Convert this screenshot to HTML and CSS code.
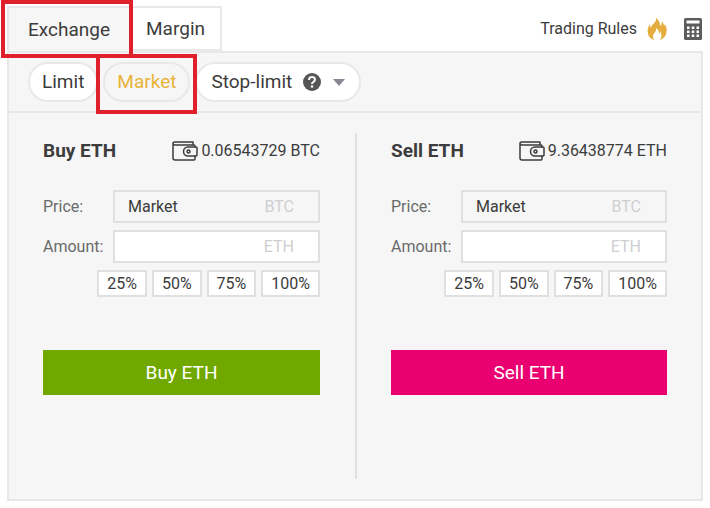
FILE: index.html
```html
<!DOCTYPE html>
<html lang="en">
<head>
<meta charset="utf-8">
<meta name="viewport" content="width=device-width, initial-scale=1">
<title>Exchange</title>
<link rel="stylesheet" href="styles.css">
</head>
<body>
<svg class="defs" aria-hidden="true">
  <symbol id="wallet" viewBox="0 0 26 20">
    <g fill="none" stroke="currentColor" stroke-width="1.5" stroke-linejoin="round" stroke-linecap="round">
      <path d="M23 6V5Q23 4 22 4H3Q1 4 1 2.500Q1 1 3 1H21V4M1 2.500V17Q1 19 3 19H22Q23 19 23 18V15"/>
      <path d="M16 6H24Q25 6 25 7V14Q25 15 24 15H16A4.500 4.500 0 0 1 16 6Z"/>
      <circle cx="16.500" cy="10.500" r="1.500"/>
    </g>
  </symbol>
</svg>
<main class="trade">
  <header class="top">
    <nav class="tabs">
      <button class="tab active marked" type="button">Exchange</button>
      <button class="tab" type="button">Margin</button>
    </nav>
    <div class="tools">
      <a class="rules" href="#rules">Trading Rules
        <svg class="flame" viewBox="0 0 20 22" aria-hidden="true"><path fill="#e5ad3d" d="M9 0C13 3 13 6 13 8Q15 7 15 3C16 5 17 6 17 8Q18 7 18 6C20 10 20 13 19 16Q18 20 13 22C15 19 15 16 13 13Q13 15 12 16C12 13 11 11 9 10C10 14 6 15 6 18Q6 20 7 22Q2 20 1 16C0 12 1 9 3 6Q3 9 4 10C4 6 10 5 9 0Z"/></svg>
      </a>
      <button class="calc" type="button" aria-label="Calculator">
        <svg viewBox="0 0 18 22" aria-hidden="true"><rect width="18" height="22" rx="1.500" fill="#5c5c5c"/><path fill="#fff" d="M2.500 2.500H15.500V5.500H2.500ZM3 8.500H5.500V11H3ZM7.750 8.500H10.250V11H7.750ZM12.500 8.500H15V11H12.500ZM3 12.500H5.500V15H3ZM7.750 12.500H10.250V15H7.750ZM12.500 12.500H15V15H12.500ZM3 16.500H5.500V19H3ZM7.750 16.500H10.250V19H7.750ZM12.500 16.500H15V19H12.500Z"/></svg>
      </button>
    </div>
  </header>
  <section class="panel">
    <div class="types">
      <button class="pill" type="button">Limit</button>
      <button class="pill current marked" type="button">Market</button>
      <button class="pill stop" type="button">Stop-limit
        <svg class="help" viewBox="0 0 18 18" aria-hidden="true"><circle cx="9" cy="9" r="9" fill="#555"/><path d="M6 7Q6 4 9 4Q12 4 12 6.500Q12 8 10.500 8.800Q9 9.500 9 11" fill="none" stroke="#fff" stroke-width="2"/><circle cx="9" cy="13.500" r="1.300" fill="#fff"/></svg>
        <svg class="caret" viewBox="0 0 12 7" aria-hidden="true"><path fill="#878794" d="M0 0H12L6 7Z"/></svg>
      </button>
    </div>
    <div class="orders">
      <form class="order">
        <div class="head"><h2>Buy ETH</h2><span class="balance"><svg class="wallet" aria-hidden="true"><use href="#wallet"/></svg>0.06543729 BTC</span></div>
        <div class="row"><label for="bp">Price:</label><div class="field locked"><input id="bp" value="Market" readonly><span>BTC</span></div></div>
        <div class="row"><label for="ba">Amount:</label><div class="field"><input id="ba"><span>ETH</span></div></div>
        <div class="shares"><button type="button">25%</button><button type="button">50%</button><button type="button">75%</button><button type="button">100%</button></div>
        <button class="submit buy" type="button">Buy ETH</button>
      </form>
      <form class="order">
        <div class="head"><h2>Sell ETH</h2><span class="balance"><svg class="wallet" aria-hidden="true"><use href="#wallet"/></svg>9.36438774 ETH</span></div>
        <div class="row"><label for="sp">Price:</label><div class="field locked"><input id="sp" value="Market" readonly><span>BTC</span></div></div>
        <div class="row"><label for="sa">Amount:</label><div class="field"><input id="sa"><span>ETH</span></div></div>
        <div class="shares"><button type="button">25%</button><button type="button">50%</button><button type="button">75%</button><button type="button">100%</button></div>
        <button class="submit sell" type="button">Sell ETH</button>
      </form>
    </div>
  </section>
</main>
</body>
</html>
```
FILE: styles.css
```css
* { box-sizing: border-box; }
body { margin: 0; background: #fff; color: #3c3c3c; font: 16px/24px Roboto, "Liberation Sans", sans-serif; }
button, input { font: inherit; color: inherit; margin: 0; }
button { padding: 0; cursor: pointer; white-space: nowrap; }
svg { display: block; flex: none; }
.defs { position: absolute; width: 0; height: 0; }
.trade { padding: 6px 7px 7px; }

.top { display: flex; justify-content: space-between; }
.tabs { display: flex; }
.tab { height: 45px; padding: 0 15px; border: 2px solid #e8e8e8; border-bottom: 0; background: #fff; font-size: 19px; }
.tab.active { padding: 0 19px; background: #f6f6f6; }
.tab + .tab { border-left: 0; border-bottom: 2px solid #e8e8e8; }
.marked { position: relative; }
.marked::after { content: ""; position: absolute; z-index: 1; inset: -10px -9px -14px; border: 4px solid #e0202a; pointer-events: none; }
.tab.marked::after { inset: -8px -4px -7px -8px; }

.tools { display: flex; align-items: center; gap: 17px; padding-right: 1px; }
.rules { display: flex; align-items: center; gap: 10px; color: inherit; text-decoration: none; font-size: 16px; }
.flame { width: 20px; height: 22px; }
.calc { border: 0; background: none; }
.calc svg { width: 18px; height: 22px; }

.panel { border: 2px solid #e8e8e8; background: #f6f6f6; }
.types { display: flex; gap: 5px; padding: 9px 19px; border-bottom: 2px solid #e8e8e8; }
.pill { height: 40px; padding: 0 12px; border: 2px solid #e8e8e8; border-radius: 20px; background: #fff; font-size: 19px; }
.pill.current { background: #f6f6f6; color: #e8b339; }
.stop { display: flex; align-items: center; padding: 0 14px; }
.help { width: 18px; height: 18px; margin-left: 11px; }
.caret { width: 12px; height: 7px; margin-left: 12px; }

.orders { display: grid; grid-template-columns: repeat(2, minmax(0, 1fr)); padding: 20px 0; }
.order { min-height: 346px; padding: 0 35px 0 34px; }
.order + .order { border-left: 2px solid #e0e0e0; padding-right: 34px; }
.head { display: flex; justify-content: space-between; align-items: center; height: 36px; margin-bottom: 21px; }
h2 { margin: 0; font-size: 19px; font-weight: 700; }
.balance { display: flex; align-items: center; gap: 3px; }
.wallet { width: 26px; height: 20px; }
.row { display: flex; align-items: center; margin-bottom: 7px; }
.row label { width: 70px; flex: none; color: #6a6a6a; }
.field { display: flex; align-items: center; flex: 1; min-width: 0; height: 33px; padding: 0 24px 0 13px; border: 2px solid #e0e0e0; background: #fff; }
.field.locked { background: #f6f6f6; }
.field input { flex: 1; width: 100%; min-width: 0; padding: 0; border: 0; outline: 0; background: none; }
.field span { color: #cfcfd1; }
.shares { display: flex; justify-content: flex-end; gap: 5px; margin-bottom: 53px; }
.shares button { height: 27px; padding: 0 8px; border: 2px solid #e0e0e0; background: #fff; }
.submit { display: block; width: 100%; height: 45px; border: 0; color: #fff; font-size: 19px; }
.buy { background: #70a800; }
.sell { background: #eb0071; }
```
